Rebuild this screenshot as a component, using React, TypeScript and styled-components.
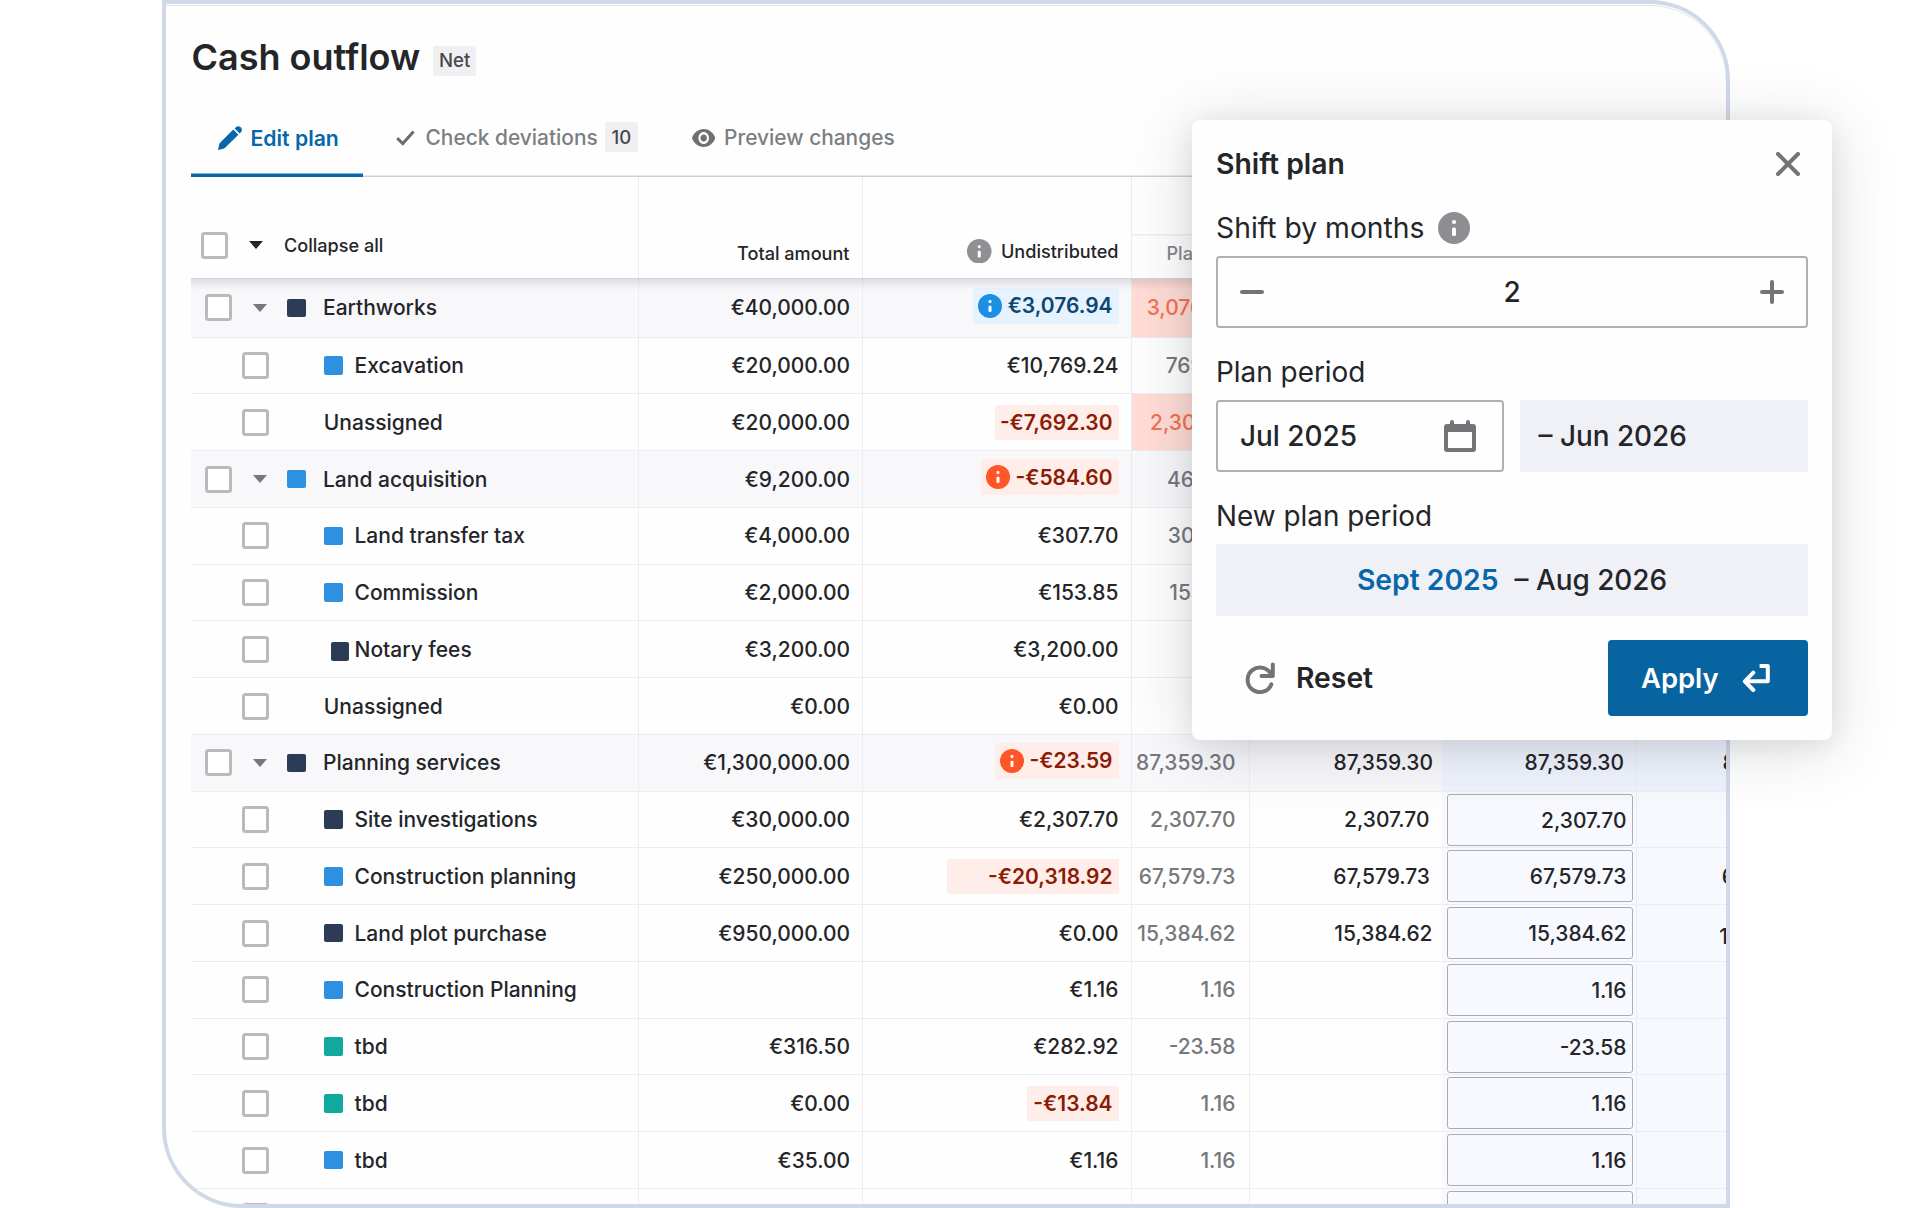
import React from "react";
import styled, { createGlobalStyle, css } from "styled-components";

const GlobalStyle = createGlobalStyle`
  *, *::before, *::after { box-sizing: border-box; }
  body {
    margin: 0;
    background: #fff;
    color: #242529;
    font-family: Inter, "Liberation Sans", sans-serif;
    font-weight: 500;
  }
  button { font: inherit; color: inherit; border: 0; background: none; padding: 0; }
  svg { display: block; flex: none; }
`;

const COLUMNS = "448px 224px 269px 118px 191.5px 195.5px 195px";
const LINE = "#ececf1";

const Page = styled.main`
  position: relative;
  width: 1912px;
  height: 1208px;
  overflow: hidden;
  padding-left: 162px;
`;

const Frame = styled.section`
  width: 1568px;
  height: 1208px;
  padding: 0 0 0 25px;
  overflow: hidden;
  border: 4px solid #d0d9e8;
  border-radius: 0 80px 0 80px;
  background: #fefefe;
  box-shadow: inset 0 1px #fff, inset 0 2px #e4e5ea;
`;

/* ---------- page heading ---------- */

const TitleRow = styled.header`
  display: flex;
  align-items: flex-start;
  gap: 13px;
  height: 95px;
  padding: 31px 0 0 0.5px;
`;

const Title = styled.h1`
  margin: 0;
  font-size: 36px;
  line-height: 44px;
  font-weight: 600;
`;

const Tag = styled.span<{ $w: number; $top?: number; $pull?: number }>`
  display: flex;
  align-items: center;
  justify-content: center;
  width: ${(p) => p.$w}px;
  height: 30px;
  margin-top: ${(p) => p.$top ?? 0}px;
  margin-left: ${(p) => -(p.$pull ?? 0)}px;
  padding-bottom: 1px;
  border-radius: 2px;
  background: #f0f0f3;
  color: #47484c;
  font-size: 18.6px;
`;

/* ---------- tabs ---------- */

const Tabs = styled.nav`
  display: flex;
  height: 77.5px;
  box-shadow: inset 0 -1.5px #ccd1d9;
`;

const Tab = styled.button<{ $active?: boolean; $gap: number; $pad: string }>`
  display: flex;
  align-items: center;
  gap: ${(p) => p.$gap}px;
  padding: ${(p) => p.$pad};
  font-size: 20.9px;
  color: #7d7e81;
  white-space: nowrap;
  ${(p) =>
    p.$active &&
    css`
      width: 172px;
      font-size: 21.2px;
      font-weight: 600;
      color: #0767aa;
      box-shadow: inset 0 -3.5px #0767aa;
    `}
`;

/* ---------- table ---------- */

const HeadRow = styled.div`
  position: relative;
  display: grid;
  grid-template-columns: ${COLUMNS};
  height: 102.5px;
  border-bottom: 1px solid #d4d4d8;
  font-size: 18.1px;
  &::after {
    content: "";
    position: absolute;
    left: 0;
    top: 100%;
    width: 100%;
    height: 11px;
    margin-top: 1px;
    background: linear-gradient(rgba(40, 42, 50, 0.12), rgba(40, 42, 50, 0));
  }
`;

const HeadCell = styled.div<{ $top: number; $muted?: boolean; $split?: boolean }>`
  display: flex;
  align-items: center;
  align-self: stretch;
  justify-content: flex-end;
  gap: 9px;
  padding: ${(p) => p.$top}px 12.5px 0 0;
  border-right: 1px solid ${LINE};
  color: ${(p) => (p.$muted ? "#85868a" : "inherit")};
  background: ${(p) =>
    p.$split ? `linear-gradient(${LINE}, ${LINE}) 0 57px / 100% 1.5px no-repeat` : "none"};
`;

const HeadLead = styled.div`
  display: flex;
  align-items: center;
  padding: 35.5px 0 0 10px;
  border-right: 1px solid ${LINE};
`;

const Row = styled.div<{ $group?: boolean; $first?: boolean }>`
  display: grid;
  grid-template-columns: ${COLUMNS};
  height: ${(p) => (p.$first ? 58.5 : 56.75)}px;
  font-size: 20.95px;
  white-space: nowrap;
  background: ${(p) => (p.$group ? "#f8f8fb" : "transparent")};
`;

const NameCell = styled.div<{ $indent: number }>`
  display: flex;
  align-items: center;
  padding: 0.4px 0 0 ${(p) => p.$indent}px;
  border-right: 1px solid ${LINE};
  border-bottom: 1px solid ${LINE};
  font-size: 21px;
`;

const Cell = styled.div<{ $right?: number; $tone?: "muted" | "alert"; $drop?: number; $line?: boolean }>`
  display: flex;
  align-items: center;
  justify-content: flex-end;
  min-width: 0;
  padding-right: ${(p) => p.$right ?? 12}px;
  padding-top: ${(p) => p.$drop ?? 0.4}px;
  border-right: 1px solid ${(p) => (p.$line === false ? "transparent" : LINE)};
  border-bottom: 1px solid ${LINE};
  color: ${(p) => (p.$tone === "alert" ? "#f37152" : p.$tone === "muted" ? "#77787b" : "inherit")};
  background: ${(p) => (p.$tone === "alert" ? "#ffdcd5" : "none")};
`;

const BlueCell = styled(Cell)<{ $group?: boolean }>`
  background: ${(p) => (p.$group ? "#eff3fd" : "#f7f9fe")};
`;

const AmountInput = styled.div`
  display: flex;
  align-items: center;
  justify-content: flex-end;
  width: 186px;
  height: 52px;
  padding: 1px 5.5px 0 0;
  border: 1.5px solid #aaacb4;
  border-radius: 3px;
`;

const Flag = styled.span<{ $kind: "info" | "error"; $w: number; $lift: number }>`
  display: flex;
  align-items: center;
  justify-content: flex-end;
  gap: 5.5px;
  width: ${(p) => p.$w}px;
  height: 35.5px;
  padding-right: 6px;
  margin-bottom: ${(p) => p.$lift * 2}px;
  border-radius: 2px;
  font-weight: 600;
  color: ${(p) => (p.$kind === "info" ? "#0a4573" : "#8c1b04")};
  background: ${(p) => (p.$kind === "info" ? "#e6f2fd" : "#ffedea")};
`;

const Checkbox = styled.span`
  width: 27px;
  height: 27px;
  flex: none;
  border: 3px solid #bababd;
  border-radius: 3.5px;
  background: #fff;
`;

const Caret = styled.span<{ $dark?: boolean }>`
  width: 0;
  height: 0;
  flex: none;
  margin: 0 20.5px 0 21px;
  border: 7px solid transparent;
  border-top: 8px solid ${(p) => (p.$dark ? "#242529" : "#77787b")};
  border-bottom: 0;
`;

const Swatch = styled.span<{ $color: string; $nudge?: boolean }>`
  width: 18.5px;
  height: 18.5px;
  flex: none;
  border-radius: 2px;
  background: ${(p) => p.$color};
  ${(p) =>
    p.$nudge &&
    css`
      position: relative;
      left: 6.5px;
      top: 2px;
    `}
`;

const ChildLead = styled.span`
  display: flex;
  align-items: center;
  width: 82px;
`;

const Label = styled.span<{ $gap: number }>`
  margin-left: ${(p) => p.$gap}px;
`;

/* ---------- dialog ---------- */

const Dialog = styled.aside`
  position: absolute;
  left: 1192px;
  top: 120px;
  width: 640px;
  height: 620px;
  display: flex;
  flex-direction: column;
  gap: 24px;
  padding: 24px;
  border-radius: 8px;
  background: #fefefe;
  font-size: 27.9px;
  line-height: 40px;
  box-shadow: 0 8px 64px rgba(30, 38, 45, 0.17), 0 4px 24px rgba(30, 38, 45, 0.08);
`;

const DialogHead = styled.div`
  display: flex;
  align-items: center;
  justify-content: space-between;
  height: 40px;
  padding-right: 8px;
  font-size: 28.3px;
  font-weight: 600;
`;

const Field = styled.div`
  display: flex;
  flex-direction: column;
  gap: 8px;
`;

const FieldLabel = styled.div<{ $size?: number }>`
  display: flex;
  align-items: center;
  gap: 13px;
  height: 40px;
  font-size: ${(p) => p.$size ?? 27.9}px;
  font-weight: 400;
`;

const FieldRow = styled.div`
  display: grid;
  grid-auto-flow: column;
  grid-auto-columns: 1fr;
  gap: 16px;
  height: 72px;
`;

const Outlined = styled.div`
  display: flex;
  align-items: center;
  justify-content: space-between;
  padding: 0 22px;
  border: 2px solid #b0b0b3;
  border-radius: 4px;
`;

const DateBox = styled(Outlined)`
  padding-right: 26px;
`;

const Filled = styled.div<{ $center?: boolean }>`
  display: flex;
  align-items: center;
  justify-content: ${(p) => (p.$center ? "center" : "flex-start")};
  gap: 16px;
  padding-left: ${(p) => (p.$center ? 0 : 18.5)}px;
  border-radius: 3px;
  background: #f0f1f7;
`;

const Accent = styled.span`
  color: #0767aa;
  font-size: 28.3px;
  font-weight: 600;
`;

const Actions = styled.div`
  display: flex;
  align-items: center;
  justify-content: space-between;
  height: 76px;
`;

const ResetButton = styled.button`
  display: flex;
  align-items: center;
  gap: 20px;
  padding-left: 28px;
  font-size: 28.3px;
  font-weight: 600;
`;

const ApplyButton = styled.button`
  display: flex;
  align-items: center;
  justify-content: flex-start;
  gap: 23px;
  width: 200px;
  height: 76px;
  padding-left: 33px;
  border-radius: 4px;
  background: #0864a1;
  color: #fff;
  font-size: 27.4px;
  font-weight: 600;
`;

/* ---------- icons ---------- */

const InfoIcon = ({ size, color }: { size: number; color: string }) => (
  <svg width={size} height={size} viewBox="0 0 32 32">
    <circle cx="16" cy="16" r="16" fill={color} />
    <rect x="14" y="8" width="4" height="4" rx="1.8" fill="#fff" />
    <rect x="14" y="15.5" width="4" height="8.5" rx="1.6" fill="#fff" />
  </svg>
);

const PencilIcon = () => (
  <svg width="24" height="24" viewBox="0 0 24 24" fill="currentColor">
    <path d="M0 24 1.2 18.2Q1.4 17.3 2 16.7L15.3 3.6 20.4 8.7 7.1 21.8Q6.4 22.5 5.5 22.7Z" />
    <path d="M16.6 2.4 18.2.9Q20.4-.8 22.6 1.3 25 3.7 23.1 5.9L21.6 7.4Z" />
  </svg>
);

const CheckIcon = () => (
  <svg width="19" height="16" viewBox="0 0 19 16" fill="none" stroke="#6c6d70" strokeWidth="3">
    <path d="M1.2 8.2 6.8 13.6 17.6 1.4" />
  </svg>
);

const EyeIcon = () => (
  <svg width="23.4" height="18" viewBox="1 4.5 22 15" preserveAspectRatio="none" fill="#6f7073">
    <path d="M12 4.5C7 4.5 2.73 7.61 1 12c1.73 4.39 6 7.5 11 7.5s9.27-3.11 11-7.5c-1.73-4.39-6-7.5-11-7.5zM12 17c-2.76 0-5-2.24-5-5s2.24-5 5-5 5 2.24 5 5-2.24 5-5 5zm0-8c-1.66 0-3 1.34-3 3s1.34 3 3 3 3-1.34 3-3-1.34-3-3-3z" />
  </svg>
);

const StrokeIcon = ({ d, size = 24, color = "#737477" }: { d: string; size?: number; color?: string }) => (
  <svg width={size} height={size} viewBox={`0 0 ${size} ${size}`} fill="none" stroke={color} strokeWidth="4" strokeLinecap="round" strokeLinejoin="round">
    <path d={d} />
  </svg>
);

const ReturnIcon = () => (
  <svg width="30" height="30" viewBox="0 0 30 30" fill="none" stroke="#fff" strokeWidth="4">
    <path d="M11.3 9.7 2.8 18.3 11.3 27" strokeLinecap="round" strokeLinejoin="round" />
    <path d="M3.4 18.3H25.8V3H17.6" strokeLinejoin="round" />
  </svg>
);

const CalendarIcon = () => (
  <svg width="32" height="32" viewBox="0 0 32 32" fill="#737477">
    <path
      fillRule="evenodd"
      d="M6 2a2 2 0 0 1 4 0v2h12V2a2 2 0 0 1 4 0v2h3a3 3 0 0 1 3 3v22a3 3 0 0 1-3 3H3a3 3 0 0 1-3-3V7a3 3 0 0 1 3-3h3ZM4 12v16h24V12Z"
    />
  </svg>
);

/* ---------- data ---------- */

const NAVY = "#2d3c56";
const BLUE = "#2d90e0";
const TEAL = "#11a99d";

type Line = {
  name: string;
  color?: string;
  group?: boolean;
  nudge?: boolean;
  total?: string;
  rest?: string;
  flag?: { kind: "info" | "error"; w: number; icon?: string; lift?: number };
  plan?: string;
  alert?: boolean;
  month?: string;
  monthRight?: number;
  next?: string;
  later?: string;
  laterRight?: number;
  laterDrop?: number;
};

const LINES: Line[] = [
  { name: "Earthworks", color: NAVY, group: true, total: "€40,000.00", rest: "€3,076.94", flag: { kind: "info", w: 145.5, icon: "#1a8fe3", lift: 2 }, plan: "3,076.94", alert: true },
  { name: "Excavation", color: BLUE, total: "€20,000.00", rest: "€10,769.24", plan: "769.23" },
  { name: "Unassigned", total: "€20,000.00", rest: "-€7,692.30", flag: { kind: "error", w: 123.5 }, plan: "2,307.70", alert: true },
  { name: "Land acquisition", color: BLUE, group: true, total: "€9,200.00", rest: "-€584.60", flag: { kind: "error", w: 137.5, icon: "#ff5527", lift: 2 }, plan: "461.54" },
  { name: "Land transfer tax", color: BLUE, total: "€4,000.00", rest: "€307.70", plan: "307.69" },
  { name: "Commission", color: BLUE, total: "€2,000.00", rest: "€153.85", plan: "153.85" },
  { name: "Notary fees", color: NAVY, nudge: true, total: "€3,200.00", rest: "€3,200.00" },
  { name: "Unassigned", total: "€0.00", rest: "€0.00" },
  { name: "Planning services", color: NAVY, group: true, total: "€1,300,000.00", rest: "-€23.59", flag: { kind: "error", w: 123.5, icon: "#ff5527", lift: 2 }, plan: "87,359.30", month: "87,359.30", monthRight: 7.5, next: "87,359.30", later: "87,359.30", laterRight: 9 },
  { name: "Site investigations", color: NAVY, total: "€30,000.00", rest: "€2,307.70", plan: "2,307.70", month: "2,307.70", monthRight: 11, next: "2,307.70" },
  { name: "Construction planning", color: BLUE, total: "€250,000.00", rest: "-€20,318.92", flag: { kind: "error", w: 172 }, plan: "67,579.73", month: "67,579.73", monthRight: 10.5, next: "67,579.73", later: "67,579.73", laterRight: 12.5 },
  { name: "Land plot purchase", color: NAVY, total: "€950,000.00", rest: "€0.00", plan: "15,384.62", month: "15,384.62", monthRight: 8, next: "15,384.62", later: "15,384.62", laterRight: 13.5, laterDrop: 8 },
  { name: "Construction Planning", color: BLUE, total: "", rest: "€1.16", plan: "1.16", next: "1.16" },
  { name: "tbd", color: TEAL, total: "€316.50", rest: "€282.92", plan: "-23.58", next: "-23.58" },
  { name: "tbd", color: TEAL, total: "€0.00", rest: "-€13.84", flag: { kind: "error", w: 91.5 }, plan: "1.16", next: "1.16" },
  { name: "tbd", color: BLUE, total: "€35.00", rest: "€1.16", plan: "1.16", next: "1.16" },
  { name: "", next: "" },
];

const PlanRow = ({ line, first }: { line: Line; first: boolean }) => (
  <Row $group={line.group} $first={first}>
    {line.group ? (
      <NameCell $indent={13.5}>
        <Checkbox />
        <Caret />
        <Swatch $color={line.color!} />
        <Label $gap={17.5}>{line.name}</Label>
      </NameCell>
    ) : (
      <NameCell $indent={51}>
        <ChildLead>
          <Checkbox />
        </ChildLead>
        {line.color && <Swatch $color={line.color} $nudge={line.nudge} />}
        <Label $gap={line.color ? 12 : -0.2}>{line.name}</Label>
      </NameCell>
    )}
    <Cell>{line.total}</Cell>
    <Cell $right={12.5}>
      {line.flag ? (
        <Flag $kind={line.flag.kind} $w={line.flag.w} $lift={line.flag.lift ?? 0}>
          {line.flag.icon && <InfoIcon size={24} color={line.flag.icon} />}
          {line.rest}
        </Flag>
      ) : (
        line.rest
      )}
    </Cell>
    <Cell $right={13.5} $tone={line.alert ? "alert" : "muted"}>{line.plan}</Cell>
    <Cell $right={line.monthRight} $line={false}>{line.month}</Cell>
    {line.group ? (
      <BlueCell $group>{line.next}</BlueCell>
    ) : (
      <BlueCell $right={3}>{line.next !== undefined && <AmountInput>{line.next}</AmountInput>}</BlueCell>
    )}
    <BlueCell $group={line.group} $right={line.laterRight} $drop={line.laterDrop}>
      {line.later}
    </BlueCell>
  </Row>
);

export default function App() {
  return (
    <>
      <GlobalStyle />
      <Page>
        <Frame>
          <TitleRow>
            <Title>Cash outflow</Title>
            <Tag $w={43} $top={10.5}>Net</Tag>
          </TitleRow>
          <Tabs>
            <Tab $active $gap={8.5} $pad="0 0 0.5px 27px">
              <PencilIcon />
              Edit plan
            </Tab>
            <Tab $gap={11} $pad="0 0 0 32.5px">
              <CheckIcon />
              Check deviations
              <Tag $w={32.5} $top={-1.5} $pull={3.5}>10</Tag>
            </Tab>
            <Tab $gap={9} $pad="0 0 0 54px">
              <EyeIcon />
              Preview changes
            </Tab>
          </Tabs>
          <HeadRow>
            <HeadLead>
              <Checkbox />
              <Caret $dark />
              <Label $gap={0.5}>Collapse all</Label>
            </HeadLead>
            <HeadCell $top={52}>Total amount</HeadCell>
            <HeadCell $top={47}>
              <InfoIcon size={24.5} color="#8f9094" />
              Undistributed
            </HeadCell>
            <HeadCell $top={52} $muted $split>Planned</HeadCell>
          </HeadRow>
          {LINES.map((line, i) => (
            <PlanRow key={i} line={line} first={i === 0} />
          ))}
        </Frame>
        <Dialog>
          <DialogHead>
            Shift plan
            <StrokeIcon d="M2 2 22 22M22 2 2 22" />
          </DialogHead>
          <Field>
            <FieldLabel $size={28.3}>
              Shift by months
              <InfoIcon size={32} color="#8c8e91" />
            </FieldLabel>
            <FieldRow>
              <Outlined>
                <StrokeIcon d="M2 12H22" />
                2
                <StrokeIcon d="M2 12H22M12 2V22" />
              </Outlined>
            </FieldRow>
          </Field>
          <Field>
            <FieldLabel>Plan period</FieldLabel>
            <FieldRow>
              <DateBox>
                Jul 2025
                <CalendarIcon />
              </DateBox>
              <Filled>– Jun 2026</Filled>
            </FieldRow>
          </Field>
          <Field>
            <FieldLabel>New plan period</FieldLabel>
            <FieldRow>
              <Filled $center>
                <Accent>Sept 2025</Accent>
                – Aug 2026
              </Filled>
            </FieldRow>
          </Field>
          <Actions>
            <ResetButton>
              <StrokeIcon size={32} d="M27.3 22.4A12.3 12.3 0 1 1 27.2 13M28.8 2.4V14H17.5" />
              Reset
            </ResetButton>
            <ApplyButton>
              Apply
              <ReturnIcon />
            </ApplyButton>
          </Actions>
        </Dialog>
      </Page>
    </>
  );
}
